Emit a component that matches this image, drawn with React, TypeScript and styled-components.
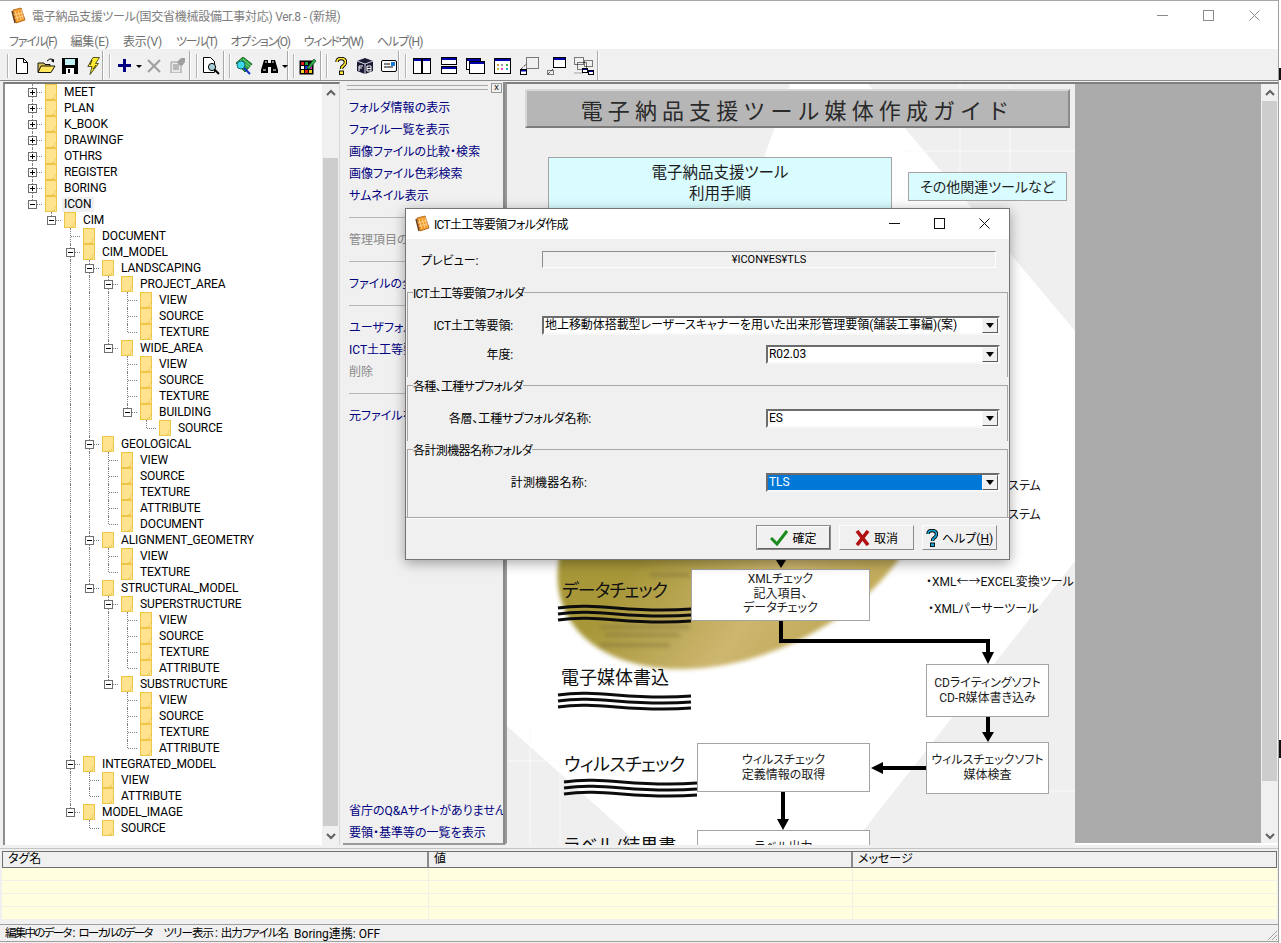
import styled, { createGlobalStyle } from "styled-components";
import type { ReactNode } from "react";

const UI_FONT = `"Roboto", "Noto Sans CJK JP", "Liberation Sans", sans-serif`;

const GlobalStyle = createGlobalStyle`
  html, body { margin: 0; padding: 0; background: #fff; }
  body {
    font-family: ${UI_FONT};
    font-size: 12px;
    font-feature-settings: "palt";
    color: #000;
  }
  * { box-sizing: border-box; }
`;

/* ---------- tree data ---------- */
type Node = [number, string, ("+" | "-")?];

const leaves = (level: number, ...names: string[]): Node[] => names.map((n) => [level, n] as Node);

const NODES: Node[] = [
  [0, "MEET", "+"],
  [0, "PLAN", "+"],
  [0, "K_BOOK", "+"],
  [0, "DRAWINGF", "+"],
  [0, "OTHRS", "+"],
  [0, "REGISTER", "+"],
  [0, "BORING", "+"],
  [0, "ICON", "-"],
  [1, "CIM", "-"],
  [2, "DOCUMENT"],
  [2, "CIM_MODEL", "-"],
  [3, "LANDSCAPING", "-"],
  [4, "PROJECT_AREA", "-"],
  ...leaves(5, "VIEW", "SOURCE", "TEXTURE"),
  [4, "WIDE_AREA", "-"],
  ...leaves(5, "VIEW", "SOURCE", "TEXTURE"),
  [5, "BUILDING", "-"],
  [6, "SOURCE"],
  [3, "GEOLOGICAL", "-"],
  ...leaves(4, "VIEW", "SOURCE", "TEXTURE", "ATTRIBUTE", "DOCUMENT"),
  [3, "ALIGNMENT_GEOMETRY", "-"],
  ...leaves(4, "VIEW", "TEXTURE"),
  [3, "STRUCTURAL_MODEL", "-"],
  [4, "SUPERSTRUCTURE", "-"],
  ...leaves(5, "VIEW", "SOURCE", "TEXTURE", "ATTRIBUTE"),
  [4, "SUBSTRUCTURE", "-"],
  ...leaves(5, "VIEW", "SOURCE", "TEXTURE", "ATTRIBUTE"),
  [2, "INTEGRATED_MODEL", "-"],
  ...leaves(3, "VIEW", "ATTRIBUTE"),
  [2, "MODEL_IMAGE", "-"],
  [3, "SOURCE"],
];

// is there a later sibling at this level, before the branch closes?
const continues = (index: number, level: number) => {
  for (let j = index + 1; j < NODES.length; j++) {
    if (NODES[j][0] === level) return true;
    if (NODES[j][0] < level) return false;
  }
  return false;
};

/* ---------- window shell ---------- */
const Frame = styled.div`
  position: relative;
  width: 1281px;
  height: 943px;
  overflow: hidden;
  background: #fff;
`;

// what shows of the desktop behind the window's right edge
const DesktopMark = styled.span<{ $top: number; $h: number }>`
  position: absolute;
  right: 0;
  top: ${(p) => p.$top}px;
  width: 2px;
  height: ${(p) => p.$h}px;
  background: #111;
`;

const AppWindow = styled.div`
  width: 1279px;
  height: 943px;
  border-top: 1px solid #a8a8a8;
  border-right: 1px solid #a0a0a0;
  display: flex;
  flex-direction: column;
  background: #f0f0f0;
`;

const TitleBar = styled.div`
  height: 29px;
  flex: none;
  display: flex;
  align-items: center;
  background: #fff;
  padding-left: 11px;
`;

const TitleText = styled.span`
  margin-left: 6px;
  color: #7d7d7d;
  font-size: 12px;
  letter-spacing: -0.27px;
  white-space: nowrap;
`;

const Controls = styled.div<{ $gap: number; $right: number }>`
  margin-left: auto;
  margin-right: ${(p) => p.$right}px;
  display: flex;
  gap: ${(p) => p.$gap}px;
  align-items: center;
`;

const MenuBar = styled.div`
  height: 19px;
  flex: none;
  display: flex;
  align-items: center;
  background: #fff;
  padding: 2px 0 0 9px;
  gap: 14px;
  color: #6e6e6e;
  font-size: 12px;
`;

const MenuItem = styled.span<{ $ls: number }>`
  letter-spacing: ${(p) => p.$ls}px;
`;

const Toolbar = styled.div`
  height: 32px;
  flex: none;
  display: flex;
  padding-left: 3px;
  background: #f0f0f0;
  border-bottom: 1px solid #8c8c8c;
`;

const Band = styled.div<{ $w: number; $pad: number }>`
  width: ${(p) => p.$w}px;
  padding-left: ${(p) => p.$pad}px;
  margin: 2px 0 0;
  height: 29px;
  display: flex;
  align-items: center;
  border-right: 1px solid #a8a8a8;
  box-shadow: 1px 0 0 #fff;
`;

const Grip = styled.span`
  width: 2px;
  height: 24px;
  flex: none;
  margin-right: 1px;
  background: #b4b4b4;
  border-right: 1px solid #fff;
`;

const ToolBtn = styled.span<{ $w?: number }>`
  width: ${(p) => p.$w ?? 24}px;
  height: 26px;
  flex: none;
  display: flex;
  align-items: center;
  justify-content: center;
`;

const Caret = styled.span`
  width: 6px;
  flex: none;
  margin-top: 1px;
  border-left: 3px solid transparent;
  border-right: 3px solid transparent;
  border-top: 3px solid #000;
`;

const Main = styled.div`
  height: 765px;
  flex: none;
  display: flex;
  padding-top: 1px;
  background: #f0f0f0;
`;

/* ---------- tree ---------- */
const TreePanel = styled.div`
  width: 337px;
  height: 763px;
  margin-left: 3px;
  flex: none;
  display: flex;
  background: #fff;
  border-top: 2px solid #7c7c7c;
  border-left: 2px solid #8e8e8e;
  border-right: 1px solid #d8d8d8;
`;

const TreeList = styled.div`
  flex: 1;
  padding-left: 18px;
  overflow: hidden;
`;

const TreeRow = styled.div`
  height: 16px;
  display: flex;
  align-items: center;
`;

const Guide = styled.span<{ $down: boolean }>`
  position: relative;
  width: 19px;
  height: 16px;
  flex: none;
  &::before {
    content: "";
    display: ${(p) => (p.$down ? "block" : "none")};
    position: absolute;
    left: 9px;
    top: 0;
    bottom: 0;
    border-left: 1px dotted #808080;
  }
`;

const Elbow = styled.span<{ $down: boolean }>`
  position: relative;
  width: 19px;
  height: 16px;
  flex: none;
  &::before {
    content: "";
    position: absolute;
    left: 9px;
    top: 0;
    height: ${(p) => (p.$down ? "16px" : "8px")};
    border-left: 1px dotted #808080;
  }
  &::after {
    content: "";
    position: absolute;
    left: 10px;
    right: 0;
    top: 8px;
    border-top: 1px dotted #808080;
  }
`;

const Toggle = styled.span<{ $open: boolean }>`
  position: absolute;
  z-index: 1;
  left: 5px;
  top: 4px;
  width: 9px;
  height: 9px;
  background: #fff;
  border: 1px solid #6f6f6f;
  &::before {
    content: "";
    position: absolute;
    left: 1px;
    top: 3px;
    width: 5px;
    height: 1px;
    background: #000;
  }
  &::after {
    content: "";
    display: ${(p) => (p.$open ? "none" : "block")};
    position: absolute;
    left: 3px;
    top: 1px;
    width: 1px;
    height: 5px;
    background: #000;
  }
`;

const FolderSlot = styled.span`
  width: 12px;
  height: 16px;
  margin-left: 3px;
  flex: none;
  display: flex;
`;

const NodeLabel = styled.span<{ $selected: boolean }>`
  margin-left: ${(p) => (p.$selected ? "5px" : "7px")};
  padding: 0 ${(p) => (p.$selected ? "2px" : "0")};
  height: 15px;
  line-height: 15px;
  font-size: 12px;
  letter-spacing: -0.1px;
  white-space: nowrap;
  background: ${(p) => (p.$selected ? "#f0f0f0" : "transparent")};
`;

const ScrollBar = styled.div`
  width: 17px;
  flex: none;
  display: flex;
  flex-direction: column;
  background: #f0f0f0;
`;

const ScrollArrow = styled.span`
  height: 17px;
  flex: none;
  display: flex;
  align-items: center;
  justify-content: center;
`;

const ScrollSpace = styled.span<{ $h: number }>`
  height: ${(p) => p.$h}px;
  flex: none;
`;

const ScrollThumb = styled.span<{ $h: number }>`
  height: ${(p) => p.$h}px;
  flex: none;
  margin: 0 1px;
  background: #cdcdcd;
`;

/* ---------- task pane ---------- */
const TaskPane = styled.div`
  width: 162px;
  height: 763px;
  margin-left: 3px;
  flex: none;
  display: flex;
  flex-direction: column;
  padding: 0 1px 0 6px;
  background: #f0f0f0;
  border-right: 2px solid #8a8a8a;
  border-bottom: 2px solid #9a9a9a;
  color: #000080;
  white-space: nowrap;
  overflow: hidden;
`;

const PaneHeader = styled.div`
  height: 11px;
  flex: none;
  display: flex;
  align-items: center;
  gap: 3px;
  margin: 0 0 4px -2px;
`;

const PaneGrip = styled.span`
  flex: 1;
  height: 5px;
  border-top: 1px solid #a8a8a8;
  border-bottom: 1px solid #a8a8a8;
`;

const PaneClose = styled.span`
  width: 11px;
  height: 10px;
  flex: none;
  display: flex;
  align-items: center;
  justify-content: center;
  border: 1px solid #9a9a9a;
  font-size: 9px;
  line-height: 1;
  color: #000;
  font-family: "Liberation Sans", sans-serif;
`;

const TaskLink = styled.div<{ $disabled?: boolean }>`
  height: 22px;
  flex: none;
  line-height: 22px;
  font-size: 12px;
  color: ${(p) => (p.$disabled ? "#8a8a8a" : "#000080")};
`;

const TaskRule = styled.hr`
  width: 160px;
  height: 0;
  flex: none;
  margin: 10px 0 11px;
  border: 0;
  border-top: 1px solid #b8b8b8;
`;

const TaskFooter = styled.div`
  margin-top: auto;
  margin-bottom: -1px;
`;

/* ---------- guide picture ---------- */
const GuideArea = styled.div`
  flex: 1;
  height: 763px;
  display: flex;
  background: #ababab;
  border-top: 2px solid #7f7f7f;
  border-left: 2px solid #989898;
  border-bottom: 2px solid #fff;
`;

const Canvas = styled.div`
  position: relative;
  width: 568px;
  height: 761px;
  flex: none;
  overflow: hidden;
  background: #efefef;
`;

const CanvasArt = styled.svg`
  position: absolute;
  left: 0;
  top: 0;
`;

const MdiSpace = styled.div`
  flex: 1;
`;

const GuideTitle = styled.div`
  position: absolute;
  left: 18px;
  top: 5px;
  width: 545px;
  height: 39px;
  display: flex;
  align-items: center;
  justify-content: center;
  background: #b6b6b6;
  border: 2px solid;
  border-color: #d8d8d8 #8c8c8c #7c7c7c #d8d8d8;
  font-size: 22px;
  letter-spacing: 5.1px;
  color: #2a2a2a;
  font-feature-settings: normal;
`;

const FlowBox = styled.div<{ $x: number; $y: number; $w: number; $h: number; $tint?: boolean; $size?: number; $lh?: number; $pad?: number }>`
  position: absolute;
  left: ${(p) => p.$x - 507}px;
  top: ${(p) => p.$y - 83}px;
  width: ${(p) => p.$w}px;
  height: ${(p) => p.$h}px;
  padding-top: ${(p) => p.$pad ?? 5}px;
  text-align: center;
  white-space: pre;
  background: ${(p) => (p.$tint ? "#d9fdff" : "#fff")};
  border: 1px solid #a4a4a4;
  font-size: ${(p) => p.$size ?? 12}px;
  line-height: ${(p) => p.$lh ?? 14.5}px;
  color: #1c1c1c;
`;

const StepLabel = styled.div<{ $x: number; $y: number; $ls?: number }>`
  position: absolute;
  left: ${(p) => p.$x - 507}px;
  top: ${(p) => p.$y - 83}px;
  font-size: 18px;
  line-height: 24px;
  letter-spacing: ${(p) => p.$ls ?? 0}px;
  color: #111;
  white-space: nowrap;
`;

const SideNote = styled.div<{ $x: number; $y: number }>`
  position: absolute;
  left: ${(p) => p.$x - 507}px;
  top: ${(p) => p.$y - 83}px;
  font-size: 12px;
  line-height: 14px;
  color: #111;
  white-space: nowrap;
`;

/* ---------- message grid & status ---------- */
const PanelRule = styled.div`
  height: 1px;
  flex: none;
  margin-top: 2px;
  background: #c4c4c4;
`;

const GridPanel = styled.div`
  height: 69px;
  flex: none;
  margin: 2px 1px 0 2px;
  background: #ffffe0;
  display: flex;
  flex-direction: column;
`;

const GridHeader = styled.div`
  height: 17px;
  flex: none;
  display: grid;
  grid-template-columns: 426px 424px 1fr;
  border: 1px solid #6e6e6e;
  background: #f0f0f0;
`;

const HeaderCell = styled.div`
  padding-left: 5px;
  line-height: 15px;
  font-size: 12px;
  border-right: 2px solid #8a8a8a;
  &:last-child { border-right: 0; }
`;

const GridRow = styled.div`
  height: 13px;
  flex: none;
  display: grid;
  grid-template-columns: 427px 424px 1fr;
  border-bottom: 1px solid #f0f0e8;
`;

const GridCell = styled.div`
  border-right: 1px solid #f0f0e8;
  &:last-child { border-right: 0; }
`;

const StatusBar = styled.div`
  height: 18px;
  flex: none;
  margin-top: 4px;
  position: relative;
  display: flex;
  align-items: center;
  padding: 0 0 2px 5px;
  border-top: 1px solid #a0a0a0;
  border-bottom: 1px solid #a0a0a0;
  font-size: 12px;
`;

const StatusText = styled.span<{ $gap: number }>`
  margin-right: ${(p) => p.$gap}px;
  white-space: nowrap;
`;

// the bar's kana run much narrower than the fallback font's
const StatusKana = styled.span<{ $ls: number }>`
  font-size: 11.5px;
  letter-spacing: ${(p) => p.$ls}px;
  &:first-child { margin-right: 2px; }
`;

const SizeGrip = styled.svg`
  position: absolute;
  right: 0;
  bottom: 0;
`;

/* ---------- dialog ---------- */
const Dialog = styled.div`
  position: absolute;
  left: 405px;
  top: 208px;
  width: 605px;
  height: 352px;
  display: flex;
  flex-direction: column;
  background: #f0f0f0;
  border: 1px solid #757575;
  box-shadow: 0 3px 12px rgba(0, 0, 0, 0.35);
`;

const DialogTitle = styled.div`
  height: 30px;
  flex: none;
  display: flex;
  align-items: center;
  padding: 0 0 2px 9px;
  background: #fff;
  font-size: 12px;
`;

const DialogTitleText = styled.span`
  margin-left: 4px;
  letter-spacing: -0.7px;
`;

const PreviewRow = styled.div`
  height: 16px;
  margin: 12px 13px 0 0;
  flex: none;
  display: flex;
  align-items: center;
`;

const PreviewLabel = styled.span`
  width: 136px;
  padding-left: 15px;
  flex: none;
`;

const PreviewBox = styled.div`
  flex: 1;
  height: 17px;
  line-height: 15px;
  text-align: center;
  font-size: 11px;
  border: 1px solid;
  border-color: #8c8c8c #fff #fff #8c8c8c;
`;

const Group = styled.fieldset<{ $h: number; $top: number; $pt: number }>`
  height: ${(p) => p.$h}px;
  margin: ${(p) => p.$top}px 1px 0 1px;
  padding: ${(p) => p.$pt}px 7px 0 0;
  flex: none;
  display: flex;
  flex-direction: column;
  gap: 10px;
  min-width: 0;
  border: 1px solid #a6a6a6;
  border-bottom: 0;
`;

const GroupLegend = styled.legend<{ $ls: number }>`
  margin-left: 5px;
  padding: 0;
  height: 16px;
  line-height: 20px;
  font-size: 12px;
  letter-spacing: ${(p) => p.$ls}px;
`;

const FieldRow = styled.div`
  display: flex;
  align-items: center;
  height: 19px;
`;

const FieldLabel = styled.span<{ $end: number; $ls?: number }>`
  width: ${(p) => p.$end - 408}px;
  flex: none;
  padding-bottom: 2px;
  text-align: right;
  white-space: nowrap;
  letter-spacing: ${(p) => p.$ls ?? -0.15}px;
`;

const Combo = styled.div<{ $w: number }>`
  width: ${(p) => p.$w}px;
  height: 19px;
  margin-left: auto;
  display: flex;
  background: #fff;
  border: 2px solid;
  border-color: #6c6c6c #f8f8f8 #f8f8f8 #6c6c6c;
`;

const ComboValue = styled.span<{ $active?: boolean }>`
  flex: 1;
  min-width: 0;
  padding-left: 1px;
  line-height: 15px;
  font-size: 12px;
  letter-spacing: -0.06px;
  white-space: nowrap;
  overflow: hidden;
  color: ${(p) => (p.$active ? "#fff" : "#000")};
  background: ${(p) => (p.$active ? "#0078d7" : "transparent")};
`;

const ComboButton = styled.span`
  width: 16px;
  flex: none;
  display: flex;
  align-items: center;
  justify-content: center;
  background: #f0f0f0;
  border: 1px solid;
  border-color: #f8f8f8 #5c5c5c #5c5c5c #f8f8f8;
  &::after {
    content: "";
    border-left: 4px solid transparent;
    border-right: 4px solid transparent;
    border-top: 5px solid #000;
  }
`;

const DialogFooter = styled.div`
  flex: 1;
  display: flex;
  justify-content: flex-end;
  align-items: center;
  gap: 8px;
  padding: 0 12px 2px 0;
  border-top: 1px solid #a6a6a6;
  box-shadow: inset 0 1px 0 #fff;
`;

const DialogButton = styled.button<{ $default?: boolean; $w: number }>`
  width: ${(p) => p.$w}px;
  height: 25px;
  padding: 0;
  display: flex;
  align-items: center;
  justify-content: center;
  gap: 4px;
  font: inherit;
  font-size: 12px;
  background: #f0f0f0;
  border: ${(p) => (p.$default ? "2px" : "1px")} solid;
  border-color: ${(p) => (p.$default ? "#fdfdfd #646464 #646464 #fdfdfd" : "#fdfdfd #8a8a8a #8a8a8a #fdfdfd")};
  outline: ${(p) => (p.$default ? "1px solid #8a8a8a" : "none")};
  outline-offset: -1px;
`;

/* ---------- icons ---------- */
const Svg = ({ w = 18, h = 18, children }: { w?: number; h?: number; children: ReactNode }) => (
  <svg width={w} height={h} viewBox={`0 0 ${w} ${h}`} style={{ display: "block", flex: "none" }}>
    {children}
  </svg>
);

const AppIcon = () => (
  <Svg w={15} h={17}>
    <path d="M2 3 L10 1 L14 13 L5 16 Z" fill="#f39a26" stroke="#a85a10" strokeWidth=".8" />
    <path d="M1 4 L4 16" stroke="#6b3a12" strokeWidth="1.4" />
    <path d="M4 4 L7 14 M7 3.4 L10 13 M10 2.6 L12 12 M3 8 L12 5.6 M4 11 L13 8.8" stroke="#ffd9a0" strokeWidth=".8" />
  </Svg>
);

const FolderIcon = () => (
  <svg width="12" height="16" viewBox="0 0 12 16" style={{ display: "block" }}>
    <rect x=".5" y=".5" width="11" height="15" fill="#ffe38f" stroke="#efc545" />
    <path d="M10 11 h1.5 v4.5 h-4 v-1.2 h2.5 Z" fill="#fff1c0" stroke="#efc545" strokeWidth=".8" />
  </svg>
);

const NewIcon = () => (
  <Svg w={12} h={16}>
    <path d="M.5 .5 H7.5 L11.5 4.5 V15.5 H.5 Z" fill="#fff" stroke="#000" />
    <path d="M7.5 .5 V4.5 H11.5" fill="none" stroke="#000" />
  </Svg>
);

const OpenIcon = () => (
  <Svg w={19} h={17}>
    <path d="M1 6 H7 L8 7.5 H13 V15 H1 Z" fill="#d8c25a" stroke="#000" strokeWidth=".9" />
    <path d="M1 15.5 L4 9 H18 L14 15.5 Z" fill="#ffe45c" stroke="#000" strokeWidth=".9" />
    <path d="M10 4 Q13 0.5 16 2.5" fill="none" stroke="#000" />
    <path d="M14 4 L17 5.5 L17 2 Z" fill="#000" />
  </Svg>
);

const SaveIcon = () => (
  <Svg w={16} h={16}>
    <rect width="16" height="16" fill="#000" />
    <rect x="3" y="1" width="10" height="6" fill="#bff0f2" />
    <rect x="4" y="10" width="8" height="6" fill="#fff" />
    <rect x="6" y="11" width="2" height="4" fill="#000" />
  </Svg>
);

const BoltIcon = () => (
  <Svg w={13} h={18}>
    <path d="M6 .5 H12.5 L8.5 6.5 H11.5 L3 17.5 L5 9.5 H.8 Z" fill="#ffe92e" stroke="#454516" strokeWidth=".9" />
    <path d="M5 3 L3 8 M9 8 L6 12" stroke="#000" strokeWidth=".8" />
  </Svg>
);

const PlusIcon = () => (
  <Svg w={13} h={13}>
    <path d="M5 0 H8 V5 H13 V8 H8 V13 H5 V8 H0 V5 H5 Z" fill="#000080" />
  </Svg>
);

const CrossIcon = () => (
  <Svg w={14} h={14}>
    <path d="M1 1 L13 13 M13 1 L1 13" stroke="#a0a0a0" strokeWidth="2.2" />
  </Svg>
);

const DocStampIcon = () => (
  <Svg w={16} h={15}>
    <path d="M1 4 H11 V15 H1 Z" fill="#e8e8e8" stroke="#9a9a9a" />
    <path d="M3 7 H9 M3 9 H9 M3 11 H9" stroke="#8a8a8a" />
    <path d="M7 4 L11 0 H15 V4 L12 8 L9 7 Z" fill="#a0a0a0" />
  </Svg>
);

const PreviewIcon = () => (
  <Svg w={17} h={18}>
    <path d="M.5 .5 H7.5 L11.5 4.5 V15.5 H.5 Z" fill="#fff" stroke="#000" />
    <circle cx="9" cy="10" r="3.6" fill="#a8cfd8" stroke="#000" />
    <path d="M11.5 12.5 L16 17" stroke="#000" strokeWidth="2" />
  </Svg>
);

const BookIcon = () => (
  <Svg w={18} h={18}>
    <path d="M1 6 L8 0 L17 7 L10 15 Z" fill="#2e9b3c" stroke="#0a4f16" strokeWidth=".8" />
    <path d="M5 3 L14 10 M8 2 L16 9" stroke="#7ee08a" strokeWidth="1" />
    <circle cx="6" cy="8" r="4" fill="#3ed8e8" stroke="#0a6d7a" />
    <path d="M9 11 L15 17" stroke="#1030c8" strokeWidth="2" />
  </Svg>
);

const BinocularIcon = () => (
  <Svg w={17} h={14}>
    <path d="M3 1 H7 V4 H10 V1 H14 L17 11 V14 H10 V8 H7 V14 H0 V11 Z" fill="#000" />
    <path d="M4 3 H6 M11 3 H13 M2 11 H5 M12 11 H15" stroke="#fff" strokeWidth="1" />
  </Svg>
);

const PaletteIcon = () => (
  <Svg w={18} h={18}>
    <rect x=".5" y="3.5" width="14" height="14" fill="#000" />
    <rect x="2" y="5" width="3" height="3" fill="#e02020" />
    <rect x="6" y="5" width="3" height="3" fill="#20a040" />
    <rect x="2" y="9" width="3" height="3" fill="#fff" />
    <rect x="6" y="9" width="3" height="3" fill="#2030d0" />
    <rect x="10" y="9" width="3" height="3" fill="#e020c0" />
    <rect x="2" y="13" width="3" height="3" fill="#f0d020" />
    <rect x="6" y="13" width="3" height="3" fill="#e02020" />
    <rect x="10" y="13" width="3" height="3" fill="#f0d020" />
    <path d="M8 11 L15 2 L17 4 L10 12 Z" fill="#30b050" stroke="#0a5020" strokeWidth=".7" />
  </Svg>
);

const HelpIcon = ({ fill = "#ffe92e" }: { fill?: string }) => (
  <Svg w={12} h={18}>
    <path d="M2 5 Q2 1.5 6 1.5 Q10.5 1.5 10.5 5 Q10.5 7.5 8 9 Q6.5 10 6.5 12" fill="none" stroke="#000" strokeWidth="3.4" />
    <path d="M2 5 Q2 1.5 6 1.5 Q10.5 1.5 10.5 5 Q10.5 7.5 8 9 Q6.5 10 6.5 12" fill="none" stroke={fill} strokeWidth="1.6" />
    <rect x="4.5" y="14" width="4" height="3.5" fill={fill} stroke="#000" strokeWidth=".9" />
  </Svg>
);

const CubeIcon = () => (
  <Svg w={18} h={18}>
    <path d="M1 4 L9 1 L17 4 V14 L9 17 L1 14 Z" fill="#1a1a34" />
    <path d="M1 4 L9 7 L17 4 M9 7 V17" stroke="#d8d8e8" strokeWidth="1" fill="none" />
    <path d="M3 9 H7 M3 9 V14 M3 11 H6 M11 9 H15 V14 H11 Z M11 11.5 H15" stroke="#fff" strokeWidth="1" fill="none" />
  </Svg>
);

const CardIcon = () => (
  <Svg w={16} h={12}>
    <rect x=".5" y=".5" width="15" height="11" rx="1.5" fill="#fff" stroke="#000" />
    <rect x="10" y="2" width="4" height="4" fill="#1878d8" />
    <path d="M3 4 H9 M3 7 H12" stroke="#000" />
  </Svg>
);

const PaneWin = ({ x, y, w, h }: { x: number; y: number; w: number; h: number }) => (
  <g>
    <rect x={x + 0.5} y={y + 0.5} width={w - 1} height={h - 1} fill="#fff" stroke="#000" />
    <rect x={x + 1} y={y + 1} width={w - 2} height="2" fill="#0000a8" />
  </g>
);

const TileVIcon = () => (
  <Svg w={18} h={16}>
    <PaneWin x={0} y={0} w={9} h={16} />
    <PaneWin x={9} y={0} w={9} h={16} />
  </Svg>
);

const TileHIcon = () => (
  <Svg w={16} h={17}>
    <PaneWin x={0} y={0} w={16} h={8} />
    <PaneWin x={0} y={9} w={16} h={8} />
  </Svg>
);

const CascadeIcon = () => (
  <Svg w={19} h={16}>
    <PaneWin x={0} y={0} w={15} h={12} />
    <PaneWin x={3} y={3} w={16} h={13} />
  </Svg>
);

const ArrangeIcon = () => (
  <Svg w={17} h={16}>
    <PaneWin x={0} y={0} w={17} h={16} />
    {[
      [3, 6, "#c0a040"],
      [7, 6, "#a0a0a0"],
      [12, 6, "#50b050"],
      [3, 10, "#c0c040"],
      [7, 10, "#e040c0"],
      [12, 10, "#30b0c0"],
    ].map(([x, y, c]) => (
      <rect key={`${x}-${y}`} x={x as number} y={y as number} width="2" height="2" fill={c as string} />
    ))}
  </Svg>
);

const MinWinIcon = () => (
  <Svg w={19} h={18}>
    <rect x="6.5" y=".5" width="12" height="11" fill="none" stroke="#000" strokeDasharray="1 1" />
    <path d="M1 12 L6.5 7" stroke="#000" strokeDasharray="1 1" />
    <rect x=".5" y="12.5" width="6" height="5" fill="#fff" stroke="#000" />
    <rect x="1" y="13" width="5" height="1.5" fill="#0000a8" />
  </Svg>
);

const MaxWinIcon = () => (
  <Svg w={19} h={18}>
    <PaneWin x={6} y={0} w={13} h={11} />
    <path d="M1 17 L6 12" stroke="#000" strokeDasharray="1 1" />
    <rect x=".5" y="13.5" width="6" height="4" fill="none" stroke="#000" strokeDasharray="1 1" />
  </Svg>
);

const ArrangeMinIcon = () => (
  <Svg w={20} h={18}>
    <rect x=".5" y=".5" width="9" height="7" fill="none" stroke="#000" strokeDasharray="1 1" />
    <rect x="3.5" y="5.5" width="9" height="7" fill="none" stroke="#000" strokeDasharray="1 1" />
    <rect x="10.5" y="3.5" width="8" height="6" fill="none" stroke="#000" strokeDasharray="1 1" />
    <rect y="15" width="9" height="2" fill="#c8c8c8" />
    <rect x="8.5" y="11.5" width="5" height="4" fill="#fff" stroke="#000" />
    <rect x="9" y="12" width="4" height="1" fill="#0000a8" />
    <rect x="14.5" y="13.5" width="5" height="4" fill="#fff" stroke="#000" />
    <rect x="15" y="14" width="4" height="1" fill="#0000a8" />
  </Svg>
);

const Chevron = ({ up = false }: { up?: boolean }) => (
  <svg width="10" height="7" viewBox="0 0 10 7" style={{ display: "block" }}>
    <path d={up ? "M1 6 L5 2 L9 6" : "M1 1 L5 5 L9 1"} fill="none" stroke="#606060" strokeWidth="2" />
  </svg>
);

const WinButtons = ({ color }: { color: string }) => (
  <>
    <svg width="11" height="11" viewBox="0 0 11 11"><path d="M0 5.5 H11" stroke={color} /></svg>
    <svg width="11" height="11" viewBox="0 0 11 11"><rect x=".5" y=".5" width="10" height="10" fill="none" stroke={color} /></svg>
    <svg width="11" height="11" viewBox="0 0 11 11"><path d="M.5 .5 L10.5 10.5 M10.5 .5 L.5 10.5" stroke={color} /></svg>
  </>
);

const Waves = ({ x, y, w }: { x: number; y: number; w: number }) => (
  <g fill="none" stroke="#0c0c0c" strokeWidth="3" transform={`translate(${x} ${y})`}>
    {[0, 6, 12].map((d) => (
      <path key={d} d={`M0 ${3 + d} C ${w * 0.3} ${-3 + d}, ${w * 0.55} ${9 + d}, ${w} ${4 + d}`} />
    ))}
  </g>
);

const GuideArt = () => (
  <CanvasArt width="568" height="761" viewBox="507 83 568 761">
    <defs>
      <linearGradient id="disc" x1="0" y1="0.35" x2="0.55" y2="1">
        <stop offset="0.25" stopColor="#a79739" />
        <stop offset="0.75" stopColor="#cdb66f" />
        <stop offset="1" stopColor="#c2ac5c" />
      </linearGradient>
      <filter id="soft"><feGaussianBlur stdDeviation="2.2" /></filter>
    </defs>
    <rect x="507" y="83" width="568" height="761" fill="#efefef" />
    <path d="M790 83 H868 L1075 330 V560 L852 844 H640 L507 725 V420 L745 210 Z" fill="#fff" />
    <path d="M507 760 H640 M530 725 V844 M560 750 V844 M960 83 V190 M1010 83 V200 M900 150 H1075 M940 790 H1075" stroke="#fafafa" strokeWidth="1" fill="none" />
    <ellipse cx="742" cy="528" rx="195" ry="125" transform="rotate(-25 742 528)" fill="url(#disc)" filter="url(#soft)" />
    <g filter="url(#soft)" stroke="#6d6234" strokeWidth="3" opacity=".5">
      <path d="M650 574 H690 M600 626 H690 M605 634 H680 M600 644 H670" />
    </g>
    <Waves x={558} y={604} w={133} />
    <Waves x={558} y={691} w={133} />
    <Waves x={564} y={778} w={133} />
    <g fill="none" stroke="#000" strokeWidth="4">
      <path d="M781 620 V640 H988 V652" />
      <path d="M988 715 V732" />
      <path d="M926 767 H880" />
      <path d="M783 791 V820" />
    </g>
    <g fill="#000">
      <path d="M776 559 H786 L781 567 Z" />
      <path d="M982 651 H994 L988 663 Z" />
      <path d="M982 731 H994 L988 741 Z" />
      <path d="M883 761 V773 L871 767 Z" />
      <path d="M777 818 H789 L783 829 Z" />
    </g>
  </CanvasArt>
);

const TreeView = () => (
  <TreeList>
    {NODES.map(([level, name, state], i) => (
      <TreeRow key={`${name}-${i}`}>
        {Array.from({ length: level }, (_, k) => (
          <Guide key={k} $down={continues(i, k)} />
        ))}
        <Elbow $down={continues(i, level)}>
          {state && <Toggle $open={state === "-"} />}
        </Elbow>
        <FolderSlot>
          <FolderIcon />
        </FolderSlot>
        <NodeLabel $selected={name === "ICON"}>{name}</NodeLabel>
      </TreeRow>
    ))}
  </TreeList>
);

const MENUS: [string, number][] = [
  ["ファイル(F)", -1.3],
  ["編集(E)", -0.1],
  ["表示(V)", -0.2],
  ["ツール(T)", -1.5],
  ["オプション(O)", -1.25],
  ["ウィンドウ(W)", -1.4],
  ["ヘルプ(H)", -0.9],
];

export default function App() {
  return (
    <Frame>
      <GlobalStyle />
      <DesktopMark $top={68} $h={12} />
      <DesktopMark $top={740} $h={18} />
      <AppWindow>
        <TitleBar>
          <AppIcon />
          <TitleText>電子納品支援ツール(国交省機械設備工事対応) Ver.8 - (新規)</TitleText>
          <Controls $gap={35} $right={18}>
            <WinButtons color="#8c8c8c" />
          </Controls>
        </TitleBar>
        <MenuBar>
          {MENUS.map(([m, ls]) => (
            <MenuItem key={m} $ls={ls}>{m}</MenuItem>
          ))}
        </MenuBar>
        <Toolbar>
          <Band $w={100} $pad={4}>
            <Grip />
            <ToolBtn><NewIcon /></ToolBtn>
            <ToolBtn><OpenIcon /></ToolBtn>
            <ToolBtn><SaveIcon /></ToolBtn>
            <ToolBtn $w={22}><BoltIcon /></ToolBtn>
          </Band>
          <Band $w={87} $pad={6}>
            <Grip />
            <ToolBtn><PlusIcon /></ToolBtn>
            <Caret />
            <ToolBtn><CrossIcon /></ToolBtn>
            <ToolBtn><DocStampIcon /></ToolBtn>
          </Band>
          <Band $w={34} $pad={6}>
            <Grip />
            <ToolBtn><PreviewIcon /></ToolBtn>
          </Band>
          <Band $w={64} $pad={5}>
            <Grip />
            <ToolBtn><BookIcon /></ToolBtn>
            <ToolBtn $w={26}><BinocularIcon /></ToolBtn>
            <Caret />
          </Band>
          <Band $w={33} $pad={5}>
            <Grip />
            <ToolBtn><PaletteIcon /></ToolBtn>
          </Band>
          <Band $w={78} $pad={5}>
            <Grip />
            <ToolBtn><HelpIcon /></ToolBtn>
            <ToolBtn><CubeIcon /></ToolBtn>
            <ToolBtn><CardIcon /></ToolBtn>
          </Band>
          <Band $w={199} $pad={6}>
            <Grip />
            <ToolBtn $w={27}><TileVIcon /></ToolBtn>
            <ToolBtn $w={27}><TileHIcon /></ToolBtn>
            <ToolBtn $w={27}><CascadeIcon /></ToolBtn>
            <ToolBtn $w={27}><ArrangeIcon /></ToolBtn>
            <ToolBtn $w={27}><MinWinIcon /></ToolBtn>
            <ToolBtn $w={27}><MaxWinIcon /></ToolBtn>
            <ToolBtn $w={27}><ArrangeMinIcon /></ToolBtn>
          </Band>
        </Toolbar>
        <Main>
          <TreePanel>
            <TreeView />
            <ScrollBar>
              <ScrollArrow><Chevron up /></ScrollArrow>
              <ScrollSpace $h={57} />
              <ScrollThumb $h={668} />
              <ScrollSpace $h={2} />
              <ScrollArrow><Chevron /></ScrollArrow>
            </ScrollBar>
          </TreePanel>
          <TaskPane>
            <PaneHeader>
              <PaneGrip />
              <PaneClose>x</PaneClose>
            </PaneHeader>
            <TaskLink>フォルダ情報の表示</TaskLink>
            <TaskLink>ファイル一覧を表示</TaskLink>
            <TaskLink>画像ファイルの比較・検索</TaskLink>
            <TaskLink>画像ファイル色彩検索</TaskLink>
            <TaskLink>サムネイル表示</TaskLink>
            <TaskRule />
            <TaskLink $disabled>管理項目の編集</TaskLink>
            <TaskRule />
            <TaskLink>ファイルの全文検索</TaskLink>
            <TaskRule />
            <TaskLink>ユーザフォルダ作成</TaskLink>
            <TaskLink>ICT土工等要領フォルダ作成</TaskLink>
            <TaskLink $disabled>削除</TaskLink>
            <TaskRule />
            <TaskLink>元ファイルを開く</TaskLink>
            <TaskFooter>
              <TaskLink>省庁のQ&amp;Aサイトがありません</TaskLink>
              <TaskLink>要領・基準等の一覧を表示</TaskLink>
            </TaskFooter>
          </TaskPane>
          <GuideArea>
            <Canvas>
              <GuideArt />
              <GuideTitle>電子納品支援ツール媒体作成ガイド</GuideTitle>
              <FlowBox $x={548} $y={156} $w={344} $h={74} $tint $size={15.5} $lh={21}>{"電子納品支援ツール\n利用手順"}</FlowBox>
              <FlowBox $x={908} $y={171} $w={159} $h={29} $tint $size={14} $lh={18}>その他関連ツールなど</FlowBox>
              <SideNote $x={997} $y={478}>システム</SideNote>
              <SideNote $x={997} $y={507}>システム</SideNote>
              <StepLabel $x={562} $y={578} $ls={-1}>データチェック</StepLabel>
              <FlowBox $x={691} $y={568} $w={179} $h={52} $pad={2}>{"XMLチェック\n記入項目、\nデータチェック"}</FlowBox>
              <SideNote $x={926} $y={574}>・XML←→EXCEL変換ツール</SideNote>
              <SideNote $x={928} $y={601}>・XMLパーサーツール</SideNote>
              <StepLabel $x={561} $y={665}>電子媒体書込</StepLabel>
              <FlowBox $x={926} $y={663} $w={123} $h={53} $pad={11}>{"CDライティングソフト\nCD-R媒体書き込み"}</FlowBox>
              <FlowBox $x={926} $y={741} $w={123} $h={52} $pad={10}>{"ウィルスチェックソフト\n媒体検査"}</FlowBox>
              <StepLabel $x={564} $y={752} $ls={-0.5}>ウィルスチェック</StepLabel>
              <FlowBox $x={697} $y={742} $w={173} $h={49} $pad={9}>{"ウィルスチェック\n定義情報の取得"}</FlowBox>
              <StepLabel $x={564} $y={833}>ラベル/結果書</StepLabel>
              <FlowBox $x={697} $y={829} $w={173} $h={49} $pad={9}>ラベル出力</FlowBox>
            </Canvas>
            <MdiSpace />
            <ScrollBar>
              <ScrollArrow><Chevron up /></ScrollArrow>
              <ScrollThumb $h={680} />
              <ScrollSpace $h={47} />
              <ScrollArrow><Chevron /></ScrollArrow>
            </ScrollBar>
          </GuideArea>
        </Main>
        <PanelRule />
        <GridPanel>
          <GridHeader>
            <HeaderCell>タグ名</HeaderCell>
            <HeaderCell>値</HeaderCell>
            <HeaderCell>メッセージ</HeaderCell>
          </GridHeader>
          {[0, 1, 2, 3].map((r) => (
            <GridRow key={r}>
              <GridCell />
              <GridCell />
              <GridCell />
            </GridRow>
          ))}
        </GridPanel>
        <StatusBar>
          <StatusText $gap={12}>
            <StatusKana $ls={-1.75}>編集中のデータ</StatusKana>: <StatusKana $ls={-1.75}>ローカルのデータ</StatusKana>
          </StatusText>
          <StatusText $gap={6}>
            <StatusKana $ls={-1}>ツリー表示</StatusKana>: <StatusKana $ls={-1}>出力ファイル名</StatusKana>
          </StatusText>
          <StatusText $gap={0}>Boring連携: OFF</StatusText>
          <SizeGrip width="12" height="12" viewBox="0 0 12 12">
            <path d="M11 2 L2 11 M11 6 L6 11 M11 10 L10 11" stroke="#a0a0a0" />
          </SizeGrip>
        </StatusBar>
      </AppWindow>

      <Dialog>
        <DialogTitle>
          <AppIcon />
          <DialogTitleText>ICT土工等要領フォルダ作成</DialogTitleText>
          <Controls $gap={34} $right={19}>
            <WinButtons color="#111" />
          </Controls>
        </DialogTitle>
        <PreviewRow>
          <PreviewLabel>プレビュー:</PreviewLabel>
          <PreviewBox>¥ICON¥ES¥TLS</PreviewBox>
        </PreviewRow>
        <Group $h={93} $top={17} $pt={16}>
          <GroupLegend $ls={-0.7}>ICT土工等要領フォルダ</GroupLegend>
          <FieldRow>
            <FieldLabel $end={513}>ICT土工等要領:</FieldLabel>
            <Combo $w={458}>
              <ComboValue>地上移動体搭載型レーザースキャナーを用いた出来形管理要領(舗装工事編)(案)</ComboValue>
              <ComboButton />
            </Combo>
          </FieldRow>
          <FieldRow>
            <FieldLabel $end={513}>年度:</FieldLabel>
            <Combo $w={234}>
              <ComboValue>R02.03</ComboValue>
              <ComboButton />
            </Combo>
          </FieldRow>
        </Group>
        <Group $h={64} $top={0} $pt={16}>
          <GroupLegend $ls={-0.7}>各種、工種サブフォルダ</GroupLegend>
          <FieldRow>
            <FieldLabel $end={591}>各層、工種サブフォルダ名称:</FieldLabel>
            <Combo $w={234}>
              <ComboValue>ES</ComboValue>
              <ComboButton />
            </Combo>
          </FieldRow>
        </Group>
        <Group $h={76} $top={0} $pt={16}>
          <GroupLegend $ls={-0.6}>各計測機器名称フォルダ</GroupLegend>
          <FieldRow>
            <FieldLabel $end={587} $ls={0.2}>計測機器名称:</FieldLabel>
            <Combo $w={234}>
              <ComboValue $active>TLS</ComboValue>
              <ComboButton />
            </Combo>
          </FieldRow>
        </Group>
        <DialogFooter>
          <DialogButton $default $w={75}>
            <Svg w={18} h={17}><path d="M1 9 L7 15 L17 2" fill="none" stroke="#1a8a1a" strokeWidth="3" /></Svg>
            確定
          </DialogButton>
          <DialogButton $w={75}>
            <Svg w={15} h={16}><path d="M2 1 L13 15 M13 1 L2 15" stroke="#b01010" strokeWidth="3.6" /></Svg>
            取消
          </DialogButton>
          <DialogButton $w={75}>
            <HelpIcon fill="#18a8d8" />
            <span>ヘルプ(<u>H</u>)</span>
          </DialogButton>
        </DialogFooter>
      </Dialog>
    </Frame>
  );
}
